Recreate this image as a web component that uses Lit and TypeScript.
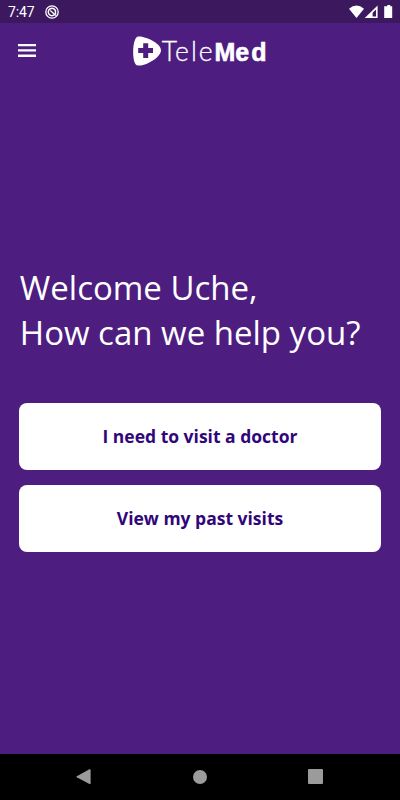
import { LitElement, html, css } from "lit";
import { customElement } from "lit/decorators.js";

@customElement("app-root")
export class AppRoot extends LitElement {
  static styles = css`
    :host {
      display: flex;
      flex-direction: column;
      height: 800px;
      background: #4d1e7f;
      color: #fff;
      font-family: "Open Sans", "Noto Sans", sans-serif;
    }
    svg {
      display: block;
    }
    .status {
      height: 23px;
      flex: none;
      display: flex;
      align-items: center;
      background: #3c185f;
      padding: 0 6px 0 8px;
      box-sizing: border-box;
    }
    .time {
      font: 400 14px/23px Roboto, sans-serif;
      letter-spacing: -0.1px;
      padding-top: 1px;
      width: 37px;
    }
    .signals {
      margin-left: auto;
    }
    .bar {
      flex: none;
      height: 55px;
      display: grid;
      grid-template-columns: 115px 1fr 115px;
      align-items: center;
    }
    .menu {
      border: 0;
      padding: 0;
      background: none;
      margin-left: 18px;
      justify-self: start;
    }
    .logo {
      margin-left: 17px;
    }
    main {
      flex: 1;
      padding: 187px 19px 0;
    }
    h1 {
      margin: 0;
      padding-left: 0.8px;
      font-size: 33px;
      line-height: 45px;
      font-weight: 400;
      white-space: nowrap;
    }
    .actions {
      display: grid;
      gap: 14.5px;
      margin-top: 48px;
    }
    .action {
      height: 67px;
      border: 0;
      border-radius: 8px;
      background: #fff;
      color: #30067a;
      font: 700 17.5px/24px "Open Sans", "Noto Sans", sans-serif;
      padding: 0 0 1px;
    }
    .nav {
      flex: none;
      height: 46.5px;
      background: #000;
      display: flex;
      justify-content: space-between;
      align-items: center;
      padding: 0 77px 0 76px;
    }
  `;

  render() {
    return html`
      <div class="status">
        <span class="time">7:47</span>
        <svg width="14" height="14" viewBox="0 0 14 14" fill="none" stroke="#fff">
          <circle cx="7" cy="7" r="6.2" stroke-width="1.3" />
          <path d="M9.4 9.8A3.7 3.7 0 1 1 10.4 5.6L10.5 9.6" stroke-width="1.5" />
          <path d="M5.3 5.5L10.8 10.6" stroke-width="1.3" />
        </svg>
        <svg class="signals" width="46" height="16" viewBox="0 0 46 16" fill="#fff">
          <path d="M1 4.8Q8.5-1.7 16 4.8L8.5 14Z" />
          <path fill-rule="evenodd" d="M29.6 1.4V14H16.7ZM28 5.4L24.6 8.8V12.4H28Z" />
          <path d="M37.6 2.2H39.3V1.1H42.3V2.2H44.2V14H36.2V2.2Z" />
        </svg>
      </div>
      <header class="bar">
        <button class="menu" aria-label="Menu">
          <svg width="18" height="13" viewBox="0 0 18 13" fill="#fff">
            <path d="M0 0H18V2.3H0ZM0 5.3H18V7.6H0ZM0 10.6H18V12.9H0Z" />
          </svg>
        </button>
        <svg class="logo" width="140" height="34" viewBox="0 0 140 34" fill="#fff">
          <path
            fill-rule="evenodd"
            d="M5 3C9.5.8 29 8.5 29 16.2C29 24.3 9.8 34 4.4 30.9C-.5 27.5.5 5.6 5 3ZM11.2 9.2V14.1H6.2V19.1H11.2V24H16.2V19.1H21V14.1H16.2V9.2Z"
          />
          <text x="29.7 43 59 66.8" y="27.3" font-family="Lato" font-weight="300" font-size="26.5" stroke="#fff" stroke-width=".3">Tele</text>
          <text x="82.4 103.2 119.2" y="27" font-family="Liberation Sans" font-weight="700" font-size="25" stroke="#fff" stroke-width=".6">Med</text>
        </svg>
      </header>
      <main>
        <h1>Welcome Uche,<br />How can we help you?</h1>
        <div class="actions">
          <button class="action">I need to visit a doctor</button>
          <button class="action">View my past visits</button>
        </div>
      </main>
      <nav class="nav">
        <svg width="15" height="16" viewBox="0 0 15 16" fill="#9b9b9b">
          <path d="M.8 7.3 13.4.3Q14.6-.2 14.6 1V14.2Q14.6 15.5 13.4 14.9L.8 8.3Q0 7.8.8 7.3Z" />
        </svg>
        <svg width="14" height="14" viewBox="0 0 14 14" fill="#9b9b9b"><circle cx="7" cy="7" r="7" /></svg>
        <svg width="15" height="15" viewBox="0 0 15 15" fill="#9b9b9b"><rect width="15" height="15" rx="1" /></svg>
      </nav>
    `;
  }
}
